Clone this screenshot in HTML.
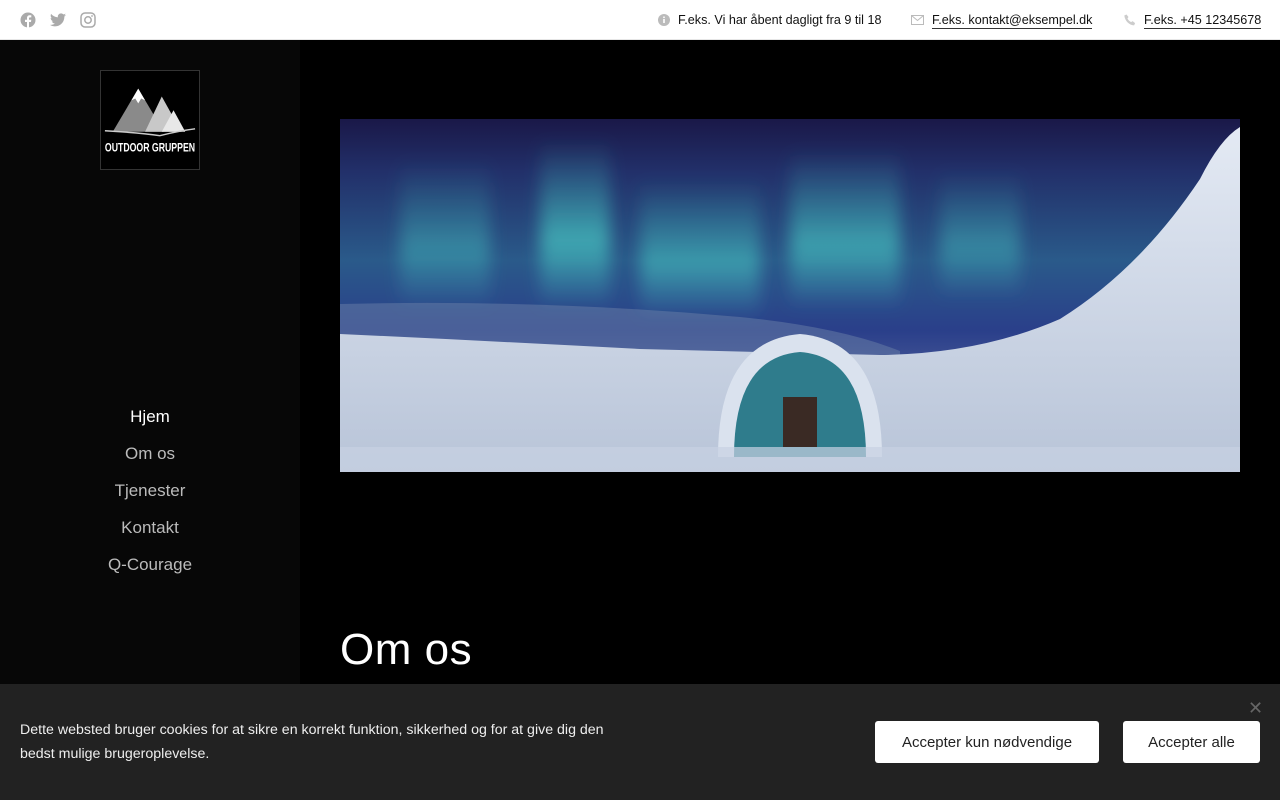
<!DOCTYPE html>
<html><head><meta charset="utf-8"><style>
*{margin:0;padding:0;box-sizing:border-box}
body{width:1280px;height:800px;overflow:hidden;background:#000;font-family:"Liberation Sans","DejaVu Sans",sans-serif;position:relative}
.top{position:absolute;left:0;top:0;width:1280px;height:40px;background:#fff;border-bottom:1px solid #e6e6e6}
.top .r{position:absolute;top:0;height:40px;display:flex;align-items:center;font-size:12.6px;color:#111}
.top .r span.u{border-bottom:1px solid #333;line-height:16px}
.side{position:absolute;left:0;top:40px;width:300px;height:760px;background:#070707}
.logo{position:absolute;left:100px;top:30px;width:100px;height:100px;background:#000;border:1px solid #333}
.nav{position:absolute;left:0;width:300px;text-align:center;font-size:17px;color:#bbb}
.hero{position:absolute;left:340px;top:119px;width:900px;height:353px;overflow:hidden}
h1{position:absolute;left:340px;top:625px;font-size:44px;color:#fff;font-weight:normal;letter-spacing:0.5px}
.ck{position:absolute;left:0;top:684px;width:1280px;height:116px;background:#222}
.ck p{position:absolute;left:20px;top:34px;width:600px;font-size:14.2px;line-height:24px;color:#eee}
.btn{position:absolute;top:37px;height:42px;background:#fff;border-radius:3px;color:#222;font-size:15px;display:flex;align-items:center;justify-content:center}
</style></head><body>
<div class="top">
<svg style="position:absolute;left:20px;top:12px" width="16" height="16" viewBox="0 0 16 16"><circle cx="8" cy="8" r="7.5" fill="#aaa"/><path d="M9 16V10h2l.3-2.3H9V6.4c0-.6.2-1 1-1h1.3V3.3C11 3.3 10.4 3.2 9.8 3.2 8.1 3.2 7 4.2 7 6v1.7H5V10h2v6z" fill="#fff"/></svg>
<svg style="position:absolute;left:50px;top:13px" width="16" height="14" viewBox="0 0 24 20"><path d="M24 2.4c-.9.4-1.8.7-2.8.8 1-.6 1.8-1.6 2.2-2.7-1 .6-2 1-3.1 1.2C19.3.7 18 0 16.6 0c-2.7 0-4.9 2.2-4.9 4.9 0 .4 0 .8.1 1.1C7.7 5.8 4.1 3.9 1.7.9c-.4.7-.7 1.6-.7 2.5 0 1.7.9 3.2 2.2 4.1-.8 0-1.6-.2-2.2-.6v.1c0 2.4 1.7 4.4 3.9 4.8-.4.1-.8.2-1.3.2-.3 0-.6 0-.9-.1.6 2 2.4 3.4 4.6 3.4-1.7 1.3-3.8 2.1-6.1 2.1-.4 0-.8 0-1.2-.1 2.2 1.4 4.8 2.2 7.5 2.2 9.1 0 14-7.5 14-14v-.6c1-.7 1.8-1.6 2.5-2.5z" fill="#aaa"/></svg>
<svg style="position:absolute;left:80px;top:12px" width="16" height="16" viewBox="0 0 16 16"><rect x="1" y="1" width="14" height="14" rx="4" fill="none" stroke="#aaa" stroke-width="1.5"/><circle cx="8" cy="8" r="3.2" fill="none" stroke="#aaa" stroke-width="1.5"/><circle cx="12" cy="4" r=".9" fill="#aaa"/></svg>
<div class="r" style="left:658px"><svg width="12" height="12" viewBox="0 0 12 12"><circle cx="6" cy="6" r="6" fill="#bbb"/><rect x="5.2" y="5" width="1.6" height="4" fill="#fff"/><circle cx="6" cy="3.3" r=".9" fill="#fff"/></svg><span style="margin-left:8px">F.eks. Vi har åbent dagligt fra 9 til 18</span></div>
<div class="r" style="left:911px"><svg width="13" height="10" viewBox="0 0 13 10"><rect x=".5" y=".5" width="12" height="9" fill="none" stroke="#bbb"/><path d="M.5 .5l6 5 6-5" fill="none" stroke="#bbb"/></svg><span class="u" style="margin-left:8px">F.eks. kontakt@eksempel.dk</span></div>
<div class="r" style="left:1124px"><svg width="12" height="12" viewBox="0 0 12 12"><path d="M2.5 0.5l2 2.5-1 1.5c.8 1.6 2 2.8 3.6 3.6l1.5-1 2.5 2-1 2.3C5 11 1 7 .3 1.5z" fill="#ccc"/></svg><span class="u" style="margin-left:8px">F.eks. +45 12345678</span></div>
</div>
<div class="side">
<div class="logo"><svg width="98" height="98" viewBox="0 0 100 100"><polygon points="12,62 38,18 64,62" fill="#8a8a8a"/><polygon points="31,30 38,18 45,30 41,28 38,33 35,28" fill="#fff"/><polygon points="45,62 62,26 82,62" fill="#c8c8c8"/><polygon points="62,62 74,40 86,62" fill="#e8e8e8"/><path d="M4 61 Q40 63 60 66 Q80 61 96 59" stroke="#ccc" fill="none" stroke-width="1.5"/><text x="50" y="82" fill="#fff" font-size="12" font-weight="bold" text-anchor="middle" font-family="Liberation Sans Narrow,Liberation Sans,sans-serif" textLength="92" lengthAdjust="spacingAndGlyphs">OUTDOOR GRUPPEN</text></svg></div>
<div class="nav" style="top:367px;color:#fff">Hjem</div>
<div class="nav" style="top:404px">Om os</div>
<div class="nav" style="top:441px">Tjenester</div>
<div class="nav" style="top:478px">Kontakt</div>
<div class="nav" style="top:515px">Q-Courage</div>
</div>
<div class="hero"><svg width="900" height="353" viewBox="0 0 900 353">
<defs><linearGradient id="sky" x1="0" y1="0" x2="0" y2="1"><stop offset="0" stop-color="#1a1848"/><stop offset=".15" stop-color="#22306a"/><stop offset=".4" stop-color="#2a5a8a"/><stop offset=".6" stop-color="#2a3f8a"/><stop offset=".75" stop-color="#4a5a98"/></linearGradient>
<linearGradient id="au" x1="0" y1="0" x2="0" y2="1"><stop offset="0" stop-color="#40c8c0" stop-opacity="0"/><stop offset=".6" stop-color="#4ee0d0" stop-opacity=".6"/><stop offset="1" stop-color="#4ee0d0" stop-opacity="0"/></linearGradient>
<linearGradient id="sn" x1="0" y1="0" x2="0" y2="1"><stop offset="0" stop-color="#e4eaf4"/><stop offset="1" stop-color="#b8c4d8"/></linearGradient>
<filter id="b"><feGaussianBlur stdDeviation="8"/></filter></defs>
<rect width="900" height="353" fill="url(#sky)"/>
<g filter="url(#b)">
<rect x="60" y="40" width="90" height="150" fill="url(#au)" opacity=".6"/>
<rect x="200" y="20" width="70" height="170" fill="url(#au)"/>
<rect x="300" y="60" width="120" height="140" fill="url(#au)" opacity=".8"/>
<rect x="450" y="30" width="110" height="160" fill="url(#au)" opacity=".9"/>
<rect x="600" y="50" width="80" height="130" fill="url(#au)" opacity=".6"/>
</g>
<path d="M0 185 Q200 180 400 198 Q500 208 560 232 L560 353 L0 353Z" fill="#6a7fa8" opacity=".5"/>
<path d="M0 215 Q150 222 300 230 L540 236 Q640 235 720 200 Q800 150 860 60 Q880 20 900 8 L900 353 L0 353Z" fill="url(#sn)"/>
<path d="M378 338 Q378 222 460 215 Q542 222 542 338Z" fill="#dae2ee"/>
<path d="M394 338 Q394 238 460 233 Q526 238 526 338Z" fill="#2f7c8c"/>
<rect x="443" y="278" width="34" height="50" fill="#3a2a24"/>
<rect x="0" y="328" width="900" height="25" fill="#c8d2e2" opacity=".7"/>
</svg></div>
<h1>Om os</h1>
<div class="ck">
<p>Dette websted bruger cookies for at sikre en korrekt funktion, sikkerhed og for at give dig den bedst mulige brugeroplevelse.</p>
<div style="position:absolute;left:1248px;top:14px;color:#666;font-size:18px">✕</div>
<div class="btn" style="left:875px;width:224px">Accepter kun nødvendige</div>
<div class="btn" style="left:1123px;width:137px">Accepter alle</div>
</div>
</body></html>
